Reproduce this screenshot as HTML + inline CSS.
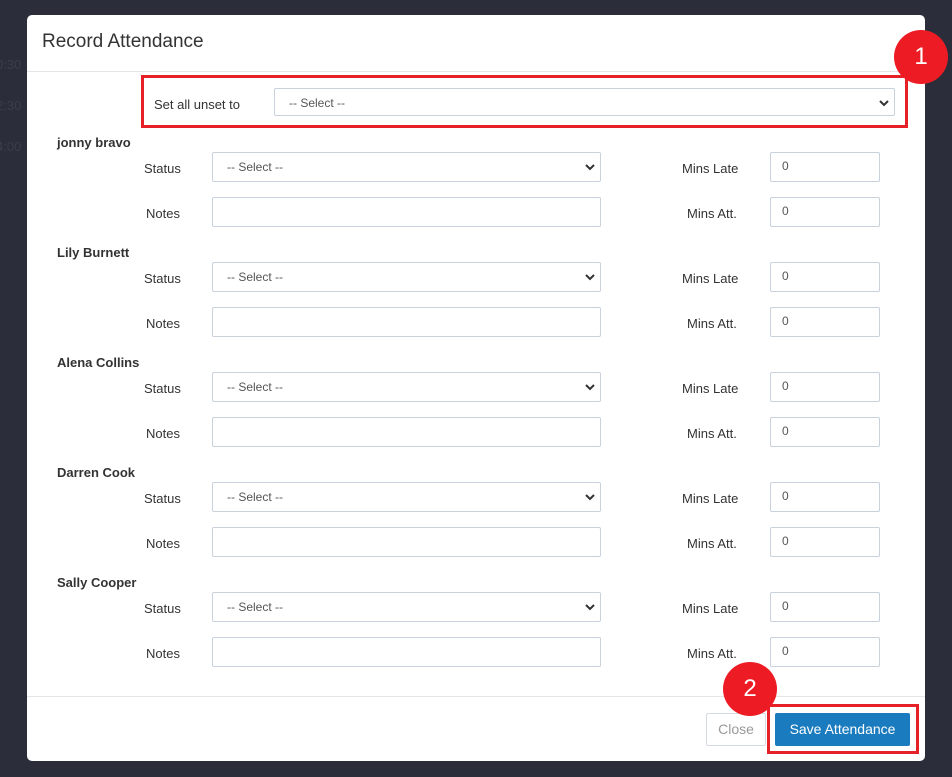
<!DOCTYPE html>
<html><head><style>
body{margin:0;width:952px;height:777px;background:#2b2e3a;font-family:"Liberation Sans",sans-serif;position:relative;overflow:hidden}
.bgt{position:absolute;left:-4px;color:#3a3e4a;font-size:13px}
.modal{position:absolute;left:27px;top:15px;width:898px;height:746px;background:#fff;border-radius:5px}
.hd{position:absolute;left:15px;top:16px;font-size:19px;color:#333}
.line{position:absolute;left:0;width:898px;height:1px;background:#e5e5e5}
.a{position:absolute}
.lbl{position:absolute;font-size:13px;color:#333}
.name{position:absolute;font-size:13px;font-weight:bold;color:#333}
.sel,.inp{position:absolute;box-sizing:border-box;border:1px solid #c8d2dc;border-radius:2px;background:#fff;font-size:12px;color:#555}
.sel span{position:absolute;left:14px;top:7px}
.sel svg{position:absolute;right:4px;top:10px}
.inp span{position:absolute;left:11px;top:6px}
.red{position:absolute;border:3px solid #e52026;box-sizing:border-box}
.badge{position:absolute;border-radius:50%;background:#ed1c24;color:#fff;font-size:24px;text-align:center;width:54px;height:54px;line-height:54px}
.blk{position:absolute;left:0;width:952px;height:110px}
.s{left:212px;width:389px;height:30px}
.n{left:212px;top:62px;width:389px;height:30px}
.m1{left:770px;top:17px;width:110px;height:30px}
.m2{left:770px;top:62px;width:110px;height:30px}
</style></head><body>
<div class="bgt" style="top:57px">0:30</div><div class="bgt" style="top:98px">2:30</div><div class="bgt" style="top:139px">4:00</div>
<div class="modal">
<div class="hd">Record Attendance</div>
<div class="line" style="top:56px"></div>
<div class="line" style="top:681px"></div>
<div class="lbl" style="left:127px;top:82px">Set all unset to</div>
<div class="sel" style="left:247px;top:73px;width:621px;height:28px"><span>-- Select --</span><svg width="12" height="8" viewBox="0 0 12 8"><path d="M2 2l4 4 4-4" stroke="#333" stroke-width="2" fill="none"/></svg></div>
</div>

<div class="blk" style="top:135px">
<div class="name" style="left:57px;top:0">jonny bravo</div>
<div class="lbl" style="left:144px;top:26px">Status</div>
<div class="lbl" style="left:146px;top:71px">Notes</div>
<div class="sel s" style="top:17px"><span>-- Select --</span><svg width="12" height="8" viewBox="0 0 12 8"><path d="M2 2l4 4 4-4" stroke="#333" stroke-width="2" fill="none"/></svg></div>
<div class="inp n"></div>
<div class="lbl" style="left:682px;top:26px">Mins Late</div>
<div class="lbl" style="left:687px;top:71px">Mins Att.</div>
<div class="inp m1"><span>0</span></div><div class="inp m2"><span>0</span></div>
</div>
<div class="blk" style="top:245px">
<div class="name" style="left:57px;top:0">Lily Burnett</div>
<div class="lbl" style="left:144px;top:26px">Status</div>
<div class="lbl" style="left:146px;top:71px">Notes</div>
<div class="sel s" style="top:17px"><span>-- Select --</span><svg width="12" height="8" viewBox="0 0 12 8"><path d="M2 2l4 4 4-4" stroke="#333" stroke-width="2" fill="none"/></svg></div>
<div class="inp n"></div>
<div class="lbl" style="left:682px;top:26px">Mins Late</div>
<div class="lbl" style="left:687px;top:71px">Mins Att.</div>
<div class="inp m1"><span>0</span></div><div class="inp m2"><span>0</span></div>
</div>
<div class="blk" style="top:355px">
<div class="name" style="left:57px;top:0">Alena Collins</div>
<div class="lbl" style="left:144px;top:26px">Status</div>
<div class="lbl" style="left:146px;top:71px">Notes</div>
<div class="sel s" style="top:17px"><span>-- Select --</span><svg width="12" height="8" viewBox="0 0 12 8"><path d="M2 2l4 4 4-4" stroke="#333" stroke-width="2" fill="none"/></svg></div>
<div class="inp n"></div>
<div class="lbl" style="left:682px;top:26px">Mins Late</div>
<div class="lbl" style="left:687px;top:71px">Mins Att.</div>
<div class="inp m1"><span>0</span></div><div class="inp m2"><span>0</span></div>
</div>
<div class="blk" style="top:465px">
<div class="name" style="left:57px;top:0">Darren Cook</div>
<div class="lbl" style="left:144px;top:26px">Status</div>
<div class="lbl" style="left:146px;top:71px">Notes</div>
<div class="sel s" style="top:17px"><span>-- Select --</span><svg width="12" height="8" viewBox="0 0 12 8"><path d="M2 2l4 4 4-4" stroke="#333" stroke-width="2" fill="none"/></svg></div>
<div class="inp n"></div>
<div class="lbl" style="left:682px;top:26px">Mins Late</div>
<div class="lbl" style="left:687px;top:71px">Mins Att.</div>
<div class="inp m1"><span>0</span></div><div class="inp m2"><span>0</span></div>
</div>
<div class="blk" style="top:575px">
<div class="name" style="left:57px;top:0">Sally Cooper</div>
<div class="lbl" style="left:144px;top:26px">Status</div>
<div class="lbl" style="left:146px;top:71px">Notes</div>
<div class="sel s" style="top:17px"><span>-- Select --</span><svg width="12" height="8" viewBox="0 0 12 8"><path d="M2 2l4 4 4-4" stroke="#333" stroke-width="2" fill="none"/></svg></div>
<div class="inp n"></div>
<div class="lbl" style="left:682px;top:26px">Mins Late</div>
<div class="lbl" style="left:687px;top:71px">Mins Att.</div>
<div class="inp m1"><span>0</span></div><div class="inp m2"><span>0</span></div>
</div>

<div class="red" style="left:141px;top:75px;width:767px;height:53px"></div>
<div class="badge" style="left:894px;top:30px">1</div>
<div class="a" style="left:706px;top:713px;width:60px;height:33px;box-sizing:border-box;border:1px solid #d5dbe1;border-radius:2px;color:#999;font-size:14px;text-align:center;line-height:31px">Close</div>
<div class="a" style="left:775px;top:713px;width:135px;height:33px;background:#1a7bbf;border-radius:2px;color:#fff;font-size:14px;text-align:center;line-height:33px">Save Attendance</div>
<div class="red" style="left:767px;top:704px;width:152px;height:50px"></div>
<div class="badge" style="left:723px;top:662px">2</div>
</body></html>
